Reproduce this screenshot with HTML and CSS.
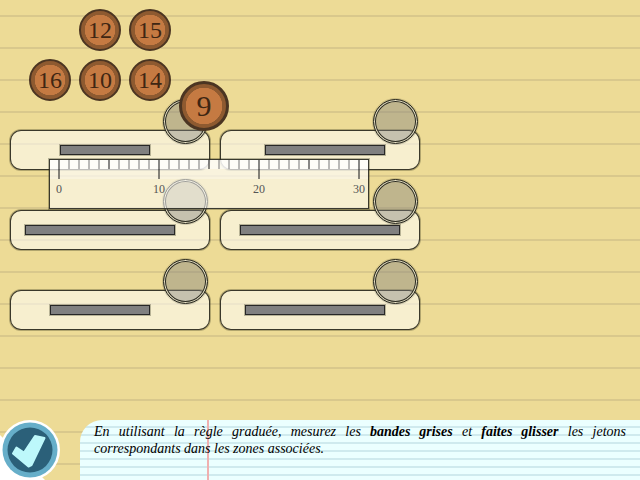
FILE: index.html
```html
<!DOCTYPE html>
<html lang="fr">
  <head>
    <meta charset="UTF-8" />
    <meta name="viewport" content="width=device-width, initial-scale=1.0" />
    <title>Mesurer les bandes</title>
    <link rel="stylesheet" href="styles.css">
  </head>
  <body>
    <div class="board">
      <div class="zones">
        <div class="zone"><div class="bar" style="margin-left: 49px; width: 90px"></div></div>
        <div class="zone"><div class="bar" style="margin-left: 44px; width: 120px"></div></div>
        <div class="zone"><div class="bar" style="margin-left: 14px; width: 150px"></div></div>
        <div class="zone"><div class="bar" style="margin-left: 19px; width: 160px"></div></div>
        <div class="zone"><div class="bar" style="margin-left: 39px; width: 100px"></div></div>
        <div class="zone"><div class="bar" style="margin-left: 24px; width: 140px"></div></div>
      </div>

      <!-- drop targets -->
      <div class="target" style="left: 163px; top: 99px"></div>
      <div class="target" style="left: 373px; top: 99px"></div>
      <div class="target" style="left: 163px; top: 179px"></div>
      <div class="target" style="left: 373px; top: 179px"></div>
      <div class="target" style="left: 163px; top: 259px"></div>
      <div class="target" style="left: 373px; top: 259px"></div>

      <div class="ruler">
        <svg class="ticks" width="318" height="20" viewBox="0 0 318 20">
          <path class="minor" d="M19 0v9M29 0v9M39 0v9M49 0v9M69 0v9M79 0v9M89 0v9M99 0v9M119 0v9M129 0v9M139 0v9M149 0v9M169 0v9M179 0v9M189 0v9M199 0v9M219 0v9M229 0v9M239 0v9M249 0v9M269 0v9M279 0v9M289 0v9M299 0v9" />
          <path class="major" d="M9 0v19M59 0v9M109 0v19M159 0v9M209 0v19M259 0v9M309 0v19" />
        </svg>
        <span class="num" style="left: 9px">0</span>
        <span class="num" style="left: 109px">10</span>
        <span class="num" style="left: 209px">20</span>
        <span class="num" style="left: 309px">30</span>
      </div>

      <!-- tokens -->
      <div class="token" style="left: 79px; top: 9px">12</div>
      <div class="token" style="left: 129px; top: 9px">15</div>
      <div class="token" style="left: 29px; top: 59px">16</div>
      <div class="token" style="left: 79px; top: 59px">10</div>
      <div class="token" style="left: 129px; top: 59px">14</div>
      <div class="token big" style="left: 179px; top: 81px">9</div>
    </div>

    <div class="footer">
      <svg class="check" width="60" height="60" viewBox="0 0 60 60">
        <polygon points="0,15 0,60 45,60" fill="#fff" />
        <circle cx="30" cy="30" r="30" fill="#fff" />
        <circle cx="30" cy="30" r="27.5" fill="#66aec9" />
        <circle cx="30" cy="30" r="22.5" fill="#2b6079" />
        <polygon points="16.5,27.5 24,32.5 35,16 44.5,18 31.5,45 28.5,46.5 13,33.5" fill="#bdf8fb" stroke="#bdf8fb" stroke-width="2" stroke-linejoin="round" />
      </svg>
      <div class="note">
        <p>En utilisant la règle graduée, mesurez les <b>bandes grises</b> et <b>faites glisser</b> les jetons correspondants dans les zones associées.</p>
      </div>
    </div>
  </body>
</html>
```

FILE: styles.css
```css
* {
  box-sizing: border-box;
}

html,
body {
  height: 100%;
}

body {
  margin: 0;
  overflow: hidden;
  display: flex;
  flex-direction: column;
  justify-content: space-between;
  font-family: "Liberation Serif", serif;
  background-color: #eddb96;
  background-image: repeating-linear-gradient(
    to bottom,
    transparent 0,
    transparent 15px,
    #d9c88c 15px,
    #d9c88c 17px,
    transparent 17px,
    transparent 32px
  );
}

.board {
  position: relative;
  padding: 130px 0 0 10px;
}

.zones {
  display: grid;
  grid-template-columns: 200px 200px;
  grid-auto-rows: 40px;
  column-gap: 10px;
  row-gap: 40px;
}

.zone {
  display: flex;
  align-items: center;
  background: rgba(255, 255, 255, 0.55);
  border: 1px solid rgba(10, 10, 0, 0.8);
  border-radius: 11px;
  box-shadow: 0 0 0 1px rgba(40, 40, 20, 0.3);
}

.bar {
  height: 10px;
  background: #808080;
  border: 1px solid rgba(10, 10, 10, 0.75);
  box-shadow: 0 0 0 1px rgba(40, 40, 20, 0.3);
}

.target {
  position: absolute;
  width: 45px;
  height: 45px;
  background: rgba(128, 128, 128, 0.42);
  border: 1px solid #2a2a20;
  border-radius: 50%;
  box-shadow:
    0 0 0 1px rgba(60, 60, 40, 0.2),
    inset 0 0 0 1px #e9e3c6,
    inset 0 0 0 2px #2a2a20;
}

.ruler {
  position: absolute;
  left: 49px;
  top: 159px;
  width: 320px;
  height: 50px;
  background: linear-gradient(
    to bottom,
    rgba(255, 255, 255, 0.85) 0,
    rgba(255, 255, 255, 0.85) 9px,
    rgba(255, 255, 255, 0.68) 9px,
    rgba(255, 255, 255, 0.68) 19px,
    rgba(255, 255, 255, 0.55) 19px
  );
  border: 1px solid rgba(10, 10, 0, 0.8);
  box-shadow: 0 0 0 1px rgba(40, 40, 20, 0.3);
}

.ticks {
  display: block;
}

.minor {
  stroke: #777;
  stroke-width: 1;
  fill: none;
}

.major {
  stroke: #111;
  stroke-width: 1;
  fill: none;
}

.num {
  position: absolute;
  top: 22px;
  transform: translateX(-50%);
  font-size: 12px;
  line-height: 14px;
  color: #555;
}

.token {
  position: absolute;
  width: 42px;
  height: 42px;
  display: flex;
  align-items: center;
  justify-content: center;
  font-size: 24px;
  color: #3f2612;
  background: radial-gradient(circle, #c57a42 0, #c57a42 15px, #8e5a30 15.5px);
  border: 2px solid #4b3522;
  border-radius: 50%;
}

.big {
  width: 50px;
  height: 50px;
  font-size: 30px;
  background: radial-gradient(circle, #c57a42 0, #c57a42 18px, #8e5a30 18.5px);
  border-width: 3px;
}

.footer {
  position: relative;
  display: flex;
  align-items: flex-end;
  gap: 20px;
  height: 60px;
}

.check {
  flex: none;
  display: block;
}

.note {
  flex: 1;
  height: 60px;
  padding: 3px 14px 0;
  border-top-left-radius: 22px;
  background-color: #ebffff;
  background-image:
    linear-gradient(#f0b0b0, #f0b0b0),
    repeating-linear-gradient(
      to bottom,
      transparent 0,
      transparent 6px,
      #cfeaee 6px,
      #cfeaee 8px
    );
  background-size: 2px 100%, 100% 100%;
  background-position: 127px 0, 0 0;
  background-repeat: no-repeat;
}

.note p {
  margin: 0;
  font-size: 14px;
  line-height: 17px;
  font-style: italic;
  text-align: justify;
  color: #000;
}

.note b {
  word-spacing: -0.5px;
}
```
